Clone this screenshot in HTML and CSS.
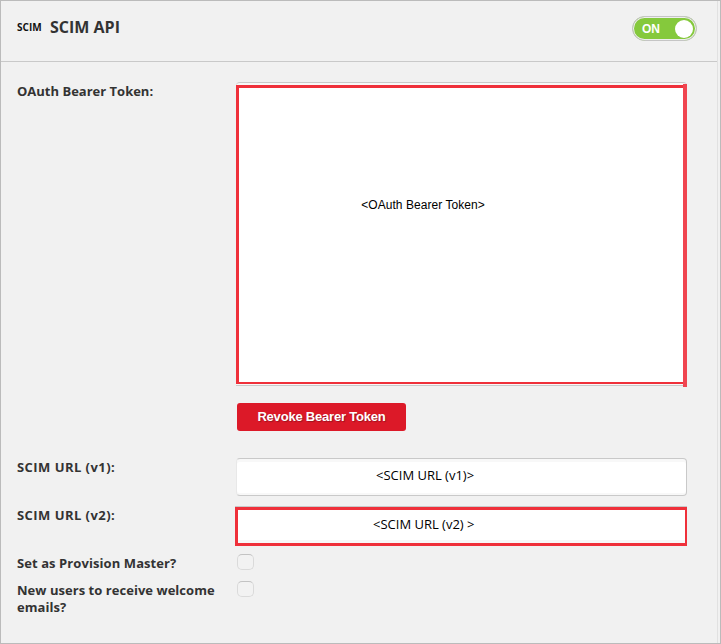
FILE: index.html
```html
<!DOCTYPE html>
<html lang="en">
<head>
<meta charset="utf-8">
<title>SCIM API</title>
<link rel="stylesheet" href="styles.css">
</head>
<body>
<main class="panel">
  <div class="content">
    <header class="header">
      <span class="logo">SCIM</span>
      <h1 class="title">SCIM API</h1>
      <div class="toggle"><span class="toggle-label">ON</span><span class="knob"></span></div>
    </header>
    <div class="form">
      <div class="row row-token">
        <div class="label">OAuth Bearer Token:</div>
        <div class="field">
          <div class="token-frame"><div class="token"><span class="token-text">&lt;OAuth Bearer Token&gt;</span></div></div>
          <button class="revoke">Revoke Bearer Token</button>
        </div>
      </div>
      <div class="row row-v1">
        <div class="label label-url">SCIM URL (v1):</div>
        <div class="url">&lt;SCIM URL (v1)&gt;</div>
      </div>
      <div class="row row-v2">
        <div class="label label-url">SCIM URL (v2):</div>
        <div class="url url-marked">&lt;SCIM URL (v2) &gt;</div>
      </div>
      <div class="row row-master">
        <div class="label label-check">Set as Provision Master?</div>
        <span class="check"></span>
      </div>
      <div class="row row-welcome">
        <div class="label label-welcome">New users to receive welcome<br>emails?</div>
        <span class="check"></span>
      </div>
    </div>
  </div>
</main>
</body>
</html>
```
FILE: styles.css
```css
* { box-sizing: border-box; }
body { margin: 0; color: #333; font-family: "Open Sans", "Noto Sans", sans-serif; }
.panel { width: 721px; height: 644px; padding-right: 2px; background: #f1f1f1; border: 1px solid #bbb; }
.content { width: 717px; height: 642px; border-right: 1px solid #e1e1e1; }
.header { display: flex; align-items: flex-start; height: 61px; padding: 15px 20px 0 16px; border-bottom: 1px solid #c9c9c9; }
.logo { width: 33px; padding-top: 5px; color: #111; font-size: 10px; line-height: 13px; font-weight: 700; white-space: nowrap; }
.title { margin: -1px 0 0; font-size: 16px; line-height: 24px; font-weight: 700; white-space: nowrap; }
.toggle { display: flex; align-items: center; justify-content: space-between; width: 65px; height: 25px; margin-left: auto; padding: 0 3px 0 9px; border: 1px solid #c5c5c5; border-radius: 13px; background: #85c93c; box-shadow: inset 0 0 0 1px #eee; }
.toggle-label { padding-top: 1px; color: #fff; font: 700 12px/23px "Liberation Sans", sans-serif; }
.knob { width: 18px; height: 18px; border-radius: 50%; background: #fff; }
.form { padding: 20px 0 0 16px; }
.row { display: flex; align-items: flex-start; }
.label { flex: none; width: 219px; font-size: 13px; line-height: 17px; font-weight: 700; white-space: nowrap; }
.row-token { height: 376px; }
.row-token .label { padding-top: 1px; }
.token-frame { width: 451px; height: 304px; padding-top: 2px; border: solid #c9c9c9; border-width: 1px 0; border-radius: 4px 4px 0 0; background: #f8f8f8; }
.token { position: relative; display: flex; justify-content: center; width: 451px; height: 299px; padding: 109px 1px 0 0; background: #fff; border: solid #ef303a; border-width: 3px 3px 2px 3px; }
.token::after { content: ""; position: absolute; top: -4px; right: -3px; bottom: -5px; width: 4px; background: #f04550; }
.token-text { margin-right: 76px; color: #000; font: 12px/16px "Liberation Sans", sans-serif; letter-spacing: 0.05px; white-space: nowrap; }
.revoke { display: block; width: 169px; height: 28px; margin: 17px 0 0 1px; padding: 0; border: 0; border-radius: 3px; background: #dc1928; color: #fff; font: 700 13px/28px "Liberation Sans", sans-serif; letter-spacing: -0.2px; text-shadow: 1px 1px 1px #9a1420; white-space: nowrap; }
.row-v1 { height: 48px; }
.label-url { padding-top: 1px; letter-spacing: 0.45px; }
.url { display: flex; width: 451px; height: 38px; padding: 7px 0 0 139px; border: 1px solid #c9c9c9; border-left-color: #e8e8e8; border-radius: 4px; background: #fff; box-shadow: inset 0 3px #f8f8f8, inset 0 -2px #f8f8f8; color: #000; font-size: 13px; line-height: 18px; white-space: nowrap; }
.url-marked { width: 452px; height: 39px; margin: 1px 0 0 -1px; padding: 5px 0 0 135px; border: solid #ef303a; border-width: 3px 2px 3px 3px; border-radius: 0; box-shadow: 0 -1px #c9c9c9, inset 0 -3px #f8f8f8; }
.row-v2 { height: 48px; }
.row-master { height: 27px; }
.label-check { padding-top: 1px; letter-spacing: 0.08px; }
.label-welcome { padding-top: 1px; letter-spacing: 0.04px; }
.check { width: 17px; height: 16px; margin-left: 1px; border: 1px solid #dadada; border-top-color: #c3c3c3; border-radius: 5px; background: #f2f2f2; }
```
